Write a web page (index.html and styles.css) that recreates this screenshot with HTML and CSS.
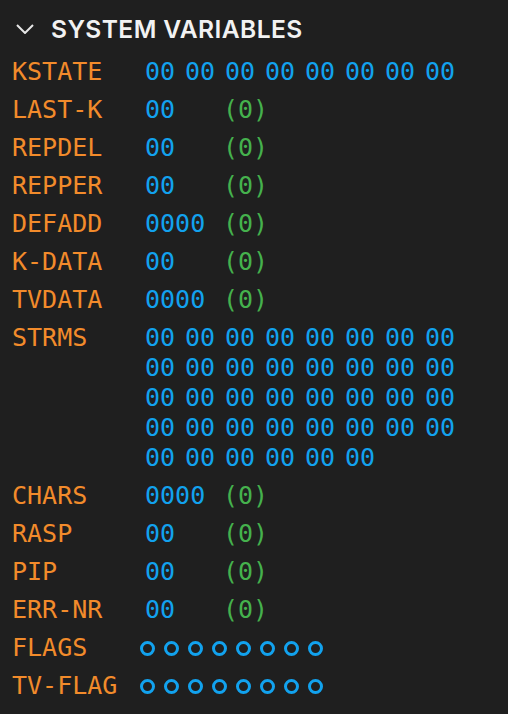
FILE: index.html
```html
<!DOCTYPE html>
<html>
<head>
<meta charset="utf-8">
<link rel="stylesheet" href="styles.css">
</head>
<body>
<div class="panel">
  <div class="header">
    <svg class="chev" width="18" height="10" viewBox="0 0 18 10"><path d="M1 1 L9 9 L17 1" fill="none" stroke="#e6e6e6" stroke-width="2"/></svg>
    <span class="title">SYSTEM VARIABLES</span>
  </div>
  <div class="vars">
    <div class="lbl">KSTATE</div>
    <div class="bytes"><span>00</span><span>00</span><span>00</span><span>00</span><span>00</span><span>00</span><span>00</span><span>00</span></div>

    <div class="lbl">LAST-K</div>
    <div class="pair"><span class="hex">00</span><span class="dec">(0)</span></div>

    <div class="lbl">REPDEL</div>
    <div class="pair"><span class="hex">00</span><span class="dec">(0)</span></div>

    <div class="lbl">REPPER</div>
    <div class="pair"><span class="hex">00</span><span class="dec">(0)</span></div>

    <div class="lbl">DEFADD</div>
    <div class="pair"><span class="hex">0000</span><span class="dec">(0)</span></div>

    <div class="lbl">K-DATA</div>
    <div class="pair"><span class="hex">00</span><span class="dec">(0)</span></div>

    <div class="lbl">TVDATA</div>
    <div class="pair"><span class="hex">0000</span><span class="dec">(0)</span></div>

    <div class="lbl">STRMS</div>
    <div class="bytes"><span>00</span><span>00</span><span>00</span><span>00</span><span>00</span><span>00</span><span>00</span><span>00</span><span>00</span><span>00</span><span>00</span><span>00</span><span>00</span><span>00</span><span>00</span><span>00</span><span>00</span><span>00</span><span>00</span><span>00</span><span>00</span><span>00</span><span>00</span><span>00</span><span>00</span><span>00</span><span>00</span><span>00</span><span>00</span><span>00</span><span>00</span><span>00</span><span>00</span><span>00</span><span>00</span><span>00</span><span>00</span><span>00</span></div>

    <div class="lbl">CHARS</div>
    <div class="pair"><span class="hex">0000</span><span class="dec">(0)</span></div>

    <div class="lbl">RASP</div>
    <div class="pair"><span class="hex">00</span><span class="dec">(0)</span></div>

    <div class="lbl">PIP</div>
    <div class="pair"><span class="hex">00</span><span class="dec">(0)</span></div>

    <div class="lbl">ERR-NR</div>
    <div class="pair"><span class="hex">00</span><span class="dec">(0)</span></div>

    <div class="lbl">FLAGS</div>
    <div class="flags"><i></i><i></i><i></i><i></i><i></i><i></i><i></i><i></i></div>

    <div class="lbl">TV-FLAG</div>
    <div class="flags"><i></i><i></i><i></i><i></i><i></i><i></i><i></i><i></i></div>
  </div>
</div>
</body>
</html>
```

FILE: styles.css
```css
html, body {
  margin: 0;
  padding: 0;
  background: #1f1f1f;
}
.panel {
  width: 508px;
  height: 714px;
  background: #1f1f1f;
  overflow: hidden;
}
.header {
  display: flex;
  align-items: center;
  height: 56px;
  padding-left: 16px;
  padding-top: 1px;
}
.chev {
  display: block;
  margin-right: 17px;
  margin-top: 0;
}
.title {
  font-family: Inter, "Liberation Sans", sans-serif;
  font-weight: 600;
  font-size: 24.6px;
  color: #f2f2f2;
  letter-spacing: 0.4px;
}
.vars {
  display: grid;
  grid-template-columns: 133px 1fr;
  row-gap: 8px;
  padding-left: 12px;
  font-family: "DejaVu Sans Mono", monospace;
  font-size: 25px;
  line-height: 30px;
}
.lbl {
  color: #f28b2b;
}
.bytes {
  display: grid;
  grid-template-columns: repeat(8, 40px);
  color: #12a2ee;
}
.pair {
  display: flex;
  color: #12a2ee;
}
.hex {
  width: 78px;
}
.dec {
  color: #45b14d;
}
.flags {
  display: flex;
  gap: 9px;
  align-items: center;
  margin-left: -5px;
}
.flags i {
  display: block;
  box-sizing: border-box;
  width: 15px;
  height: 15px;
  border: 3px solid #12a2ee;
  border-radius: 50%;
}
```
